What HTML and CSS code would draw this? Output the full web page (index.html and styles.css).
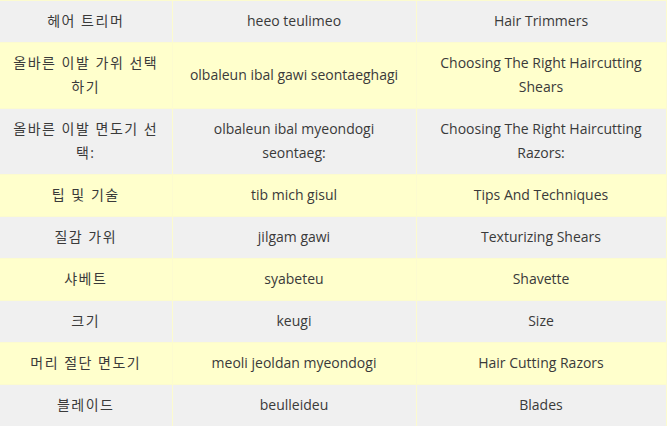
FILE: index.html
```html
<!DOCTYPE html>
<html lang="ko">
<head>
<meta charset="utf-8">
<title>Hair terms</title>
<link rel="stylesheet" href="styles.css">
</head>
<body>
<table class="terms">
  <colgroup>
    <col class="c1"><col class="c2"><col class="c3">
  </colgroup>
  <tbody>
    <tr class="gray"><td class="ko">헤어 트리머</td><td>heeo teulimeo</td><td>Hair Trimmers</td></tr>
    <tr class="yellow"><td class="ko">올바른 이발 가위 선택 하기</td><td>olbaleun ibal gawi seontaeghagi</td><td>Choosing The Right Haircutting Shears</td></tr>
    <tr class="gray"><td class="ko">올바른 이발 면도기 선택:</td><td>olbaleun ibal myeondogi seontaeg:</td><td>Choosing The Right Haircutting Razors:</td></tr>
    <tr class="yellow"><td class="ko">팁 및 기술</td><td>tib mich gisul</td><td>Tips And Techniques</td></tr>
    <tr class="gray"><td class="ko">질감 가위</td><td>jilgam gawi</td><td>Texturizing Shears</td></tr>
    <tr class="yellow"><td class="ko">샤베트</td><td>syabeteu</td><td>Shavette</td></tr>
    <tr class="gray"><td class="ko">크기</td><td>keugi</td><td>Size</td></tr>
    <tr class="yellow"><td class="ko">머리 절단 면도기</td><td>meoli jeoldan myeondogi</td><td>Hair Cutting Razors</td></tr>
    <tr class="gray"><td class="ko">블레이드</td><td>beulleideu</td><td>Blades</td></tr>
  </tbody>
</table>
</body>
</html>
```
FILE: styles.css
```css
html, body {
  margin: 0;
  padding: 0;
  background: #fdfdd0;
}
.terms {
  width: 667px;
  border-collapse: collapse;
  table-layout: fixed;
  font-family: "Open Sans", "Noto Sans CJK KR", sans-serif;
  font-size: 14px;
  color: #3a3a3a;
}
.c1 { width: 172px; }
.c2 { width: 244px; }
.c3 { width: 251px; }
.terms td {
  border-top: 1px solid #fcfbcf;
  border-right: 1px solid #fcfbcf;
  padding: 8px 10px 9px;
  line-height: 24px;
  text-align: center;
  vertical-align: middle;
}
.terms td.ko {
  letter-spacing: 1.5px;
}
.terms td:last-child {
  border-right: 3px solid #fcfbcf;
}
.gray td { background: #f0f0f0; }
.yellow td { background: #ffffcc; }
```
